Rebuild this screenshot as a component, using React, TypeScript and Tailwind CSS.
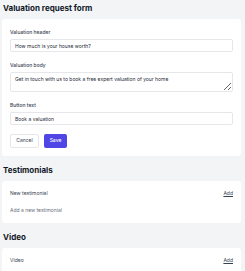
import React from 'react';

function Section({ title, children, first }: { title: string; children: React.ReactNode; first?: boolean }) {
  return (
    <section className={first ? '' : 'mt-[8px]'}>
      <h2 className="px-[1px] mb-[5px] text-[8px] leading-[12px] font-bold text-[#111827]">{title}</h2>
      <div className="rounded-[3px] bg-white px-[8px]">{children}</div>
    </section>
  );
}

function Field({ label, children }: { label: string; children: React.ReactNode }) {
  return (
    <div className="flex flex-col">
      <label className="mb-[3px] text-[5px] leading-[8px] font-medium text-[#374151]">{label}</label>
      {children}
    </div>
  );
}

export default function App() {
  const inputCls =
    'h-[13px] w-full rounded-[2px] border border-[#e5e7eb] bg-white px-[4px] text-[5px] text-[#1f2937] outline-none';

  return (
    <div className="min-h-screen bg-[#f3f4f6] pt-[2px] pl-[2px] pr-[4px] font-['Inter',sans-serif]">
      <Section title="Valuation request form" first>
        <div className="flex flex-col gap-[9px] pt-[9px] pb-[8px]">
          <Field label="Valuation header">
            <input className={inputCls} defaultValue="How much is your house worth?" />
          </Field>
          <Field label="Valuation body">
            <textarea
              className="h-[20px] w-full rounded-[2px] border border-[#e5e7eb] bg-white px-[4px] py-[2px] text-[5px] leading-[8px] text-[#1f2937] outline-none"
              defaultValue="Get in touch with us to book a free expert valuation of your home"
            />
          </Field>
          <Field label="Button text">
            <input className={inputCls} defaultValue="Book a valuation" />
          </Field>
          <div className="flex gap-[5px]">
            <button className="h-[14px] w-[29px] rounded-[2px] border border-[#e5e7eb] bg-white text-[5px] text-[#374151]">
              Cancel
            </button>
            <button className="h-[14px] w-[23px] rounded-[2px] bg-[#4f46e5] text-[5px] font-medium text-white">
              Save
            </button>
          </div>
        </div>
      </Section>

      <Section title="Testimonials">
        <div className="flex flex-col gap-[9px] pt-[8px] pb-[9px]">
          <div className="flex items-center justify-between text-[5px] leading-[8px]">
            <span className="text-[#374151]">New testimonial</span>
            <span className="text-[#374151] underline">Add</span>
          </div>
          <p className="text-[5px] leading-[8px] text-[#6b7280]">Add a new testimonial</p>
        </div>
      </Section>

      <Section title="Video">
        <div className="flex flex-col pt-[8px] pb-[20px]">
          <div className="flex items-center justify-between text-[5px] leading-[8px]">
            <span className="text-[#374151]">Video</span>
            <span className="text-[#374151] underline">Add</span>
          </div>
        </div>
      </Section>
    </div>
  );
}
